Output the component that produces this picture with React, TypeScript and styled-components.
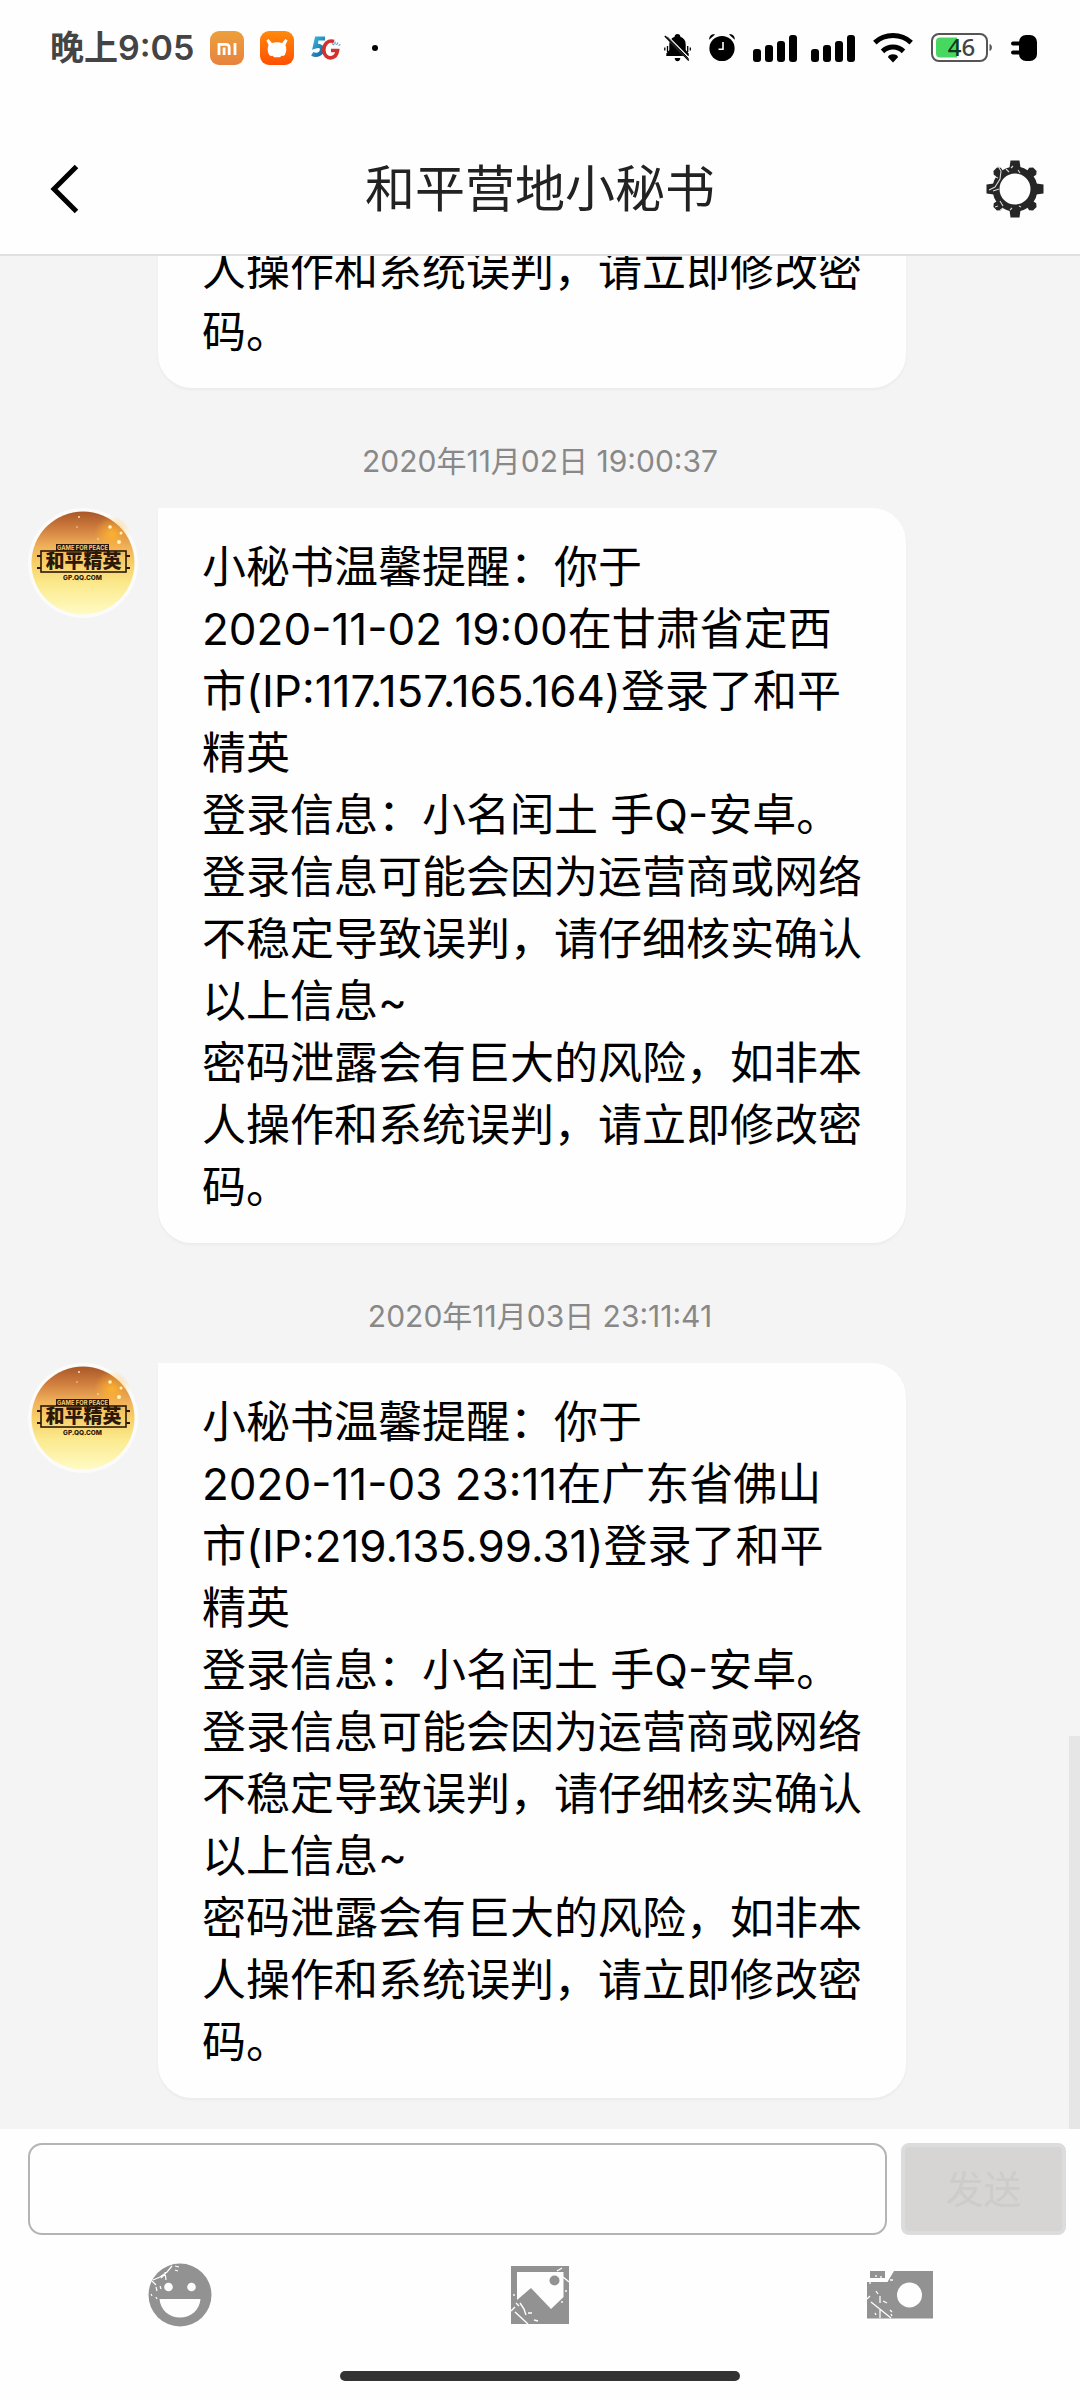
import React from 'react';
import styled, { createGlobalStyle } from 'styled-components';

const GlobalStyle = createGlobalStyle`
  * { box-sizing: border-box; }
  body {
    margin: 0;
    background: #fefefe;
    font-family: Inter, "Noto Sans CJK SC", sans-serif;
    color: #000;
  }
  button { font-family: inherit; padding: 0; border: 0; background: none; cursor: pointer; }
  svg { display: block; flex: none; }
`;

const Page = styled.div`
  display: flex;
  flex-direction: column;
  height: 100vh;
  overflow: hidden;
`;

const StatusBar = styled.div`
  display: flex;
  flex: none;
  align-items: center;
  justify-content: space-between;
  height: 96px;
  padding: 0 43px 0 50px;
`;

const StatusGroup = styled.div<{ $gap: number }>`
  display: flex;
  align-items: center;
  gap: ${(p) => p.$gap}px;
`;

const StatusDot = styled.span`
  width: 6px;
  height: 6px;
  margin-left: 14px;
  border-radius: 50%;
  background: #000;
`;

const Clock = styled.time`
  font-size: 34px;
  line-height: 40px;
  font-weight: 600;
  color: #444;
`;

const Header = styled.header`
  display: grid;
  flex: none;
  grid-template-columns: 120px 1fr 120px;
  align-items: center;
  height: 160px;
  padding: 28px 0 0;
  border-bottom: 2px solid #e0e0e0;
`;

const Title = styled.h1`
  margin: 0;
  text-align: center;
  font-size: 50px;
  line-height: 64px;
  font-weight: 400;
  color: #222;
`;

const HeaderButton = styled.button<{ $end?: boolean }>`
  display: flex;
  justify-content: ${(p) => (p.$end ? 'flex-end' : 'flex-start')};
  padding: ${(p) => (p.$end ? '0 36px 0 0' : '0 0 0 48px')};
`;

const Chat = styled.main`
  position: relative;
  display: flex;
  flex: 1;
  flex-direction: column;
  justify-content: flex-end;
  min-height: 0;
  padding: 0 28px 31px;
  overflow: hidden;
  background: #f4f4f4;
`;

const ScrollThumb = styled.div`
  position: absolute;
  right: 0;
  bottom: 0;
  width: 11px;
  height: 21%;
  background: #e6e6e6;
`;

const Stamp = styled.time`
  flex: none;
  padding: 53px 0 27px;
  text-align: center;
  font-size: 30px;
  line-height: 40px;
  color: #888;
`;

const Row = styled.article`
  display: flex;
  flex: none;
  align-items: flex-start;
  gap: 20px;
`;

const AvatarSlot = styled.div`
  flex: none;
  width: 110px;
`;

const Bubble = styled.div`
  max-width: 748px;
  padding: 28px 44px 25px;
  border-radius: 0 34px 34px 34px;
  background: #fefefe;
  box-shadow: 0 2px 3px rgba(0, 0, 0, 0.04);
`;

const Line = styled.p`
  margin: 0;
  font-size: 44px;
  line-height: 62px;
  white-space: pre-line;
`;

const Footer = styled.footer`
  flex: none;
  padding: 14px 0 19px;
  background: #fefefe;
`;

const Composer = styled.form`
  display: flex;
  gap: 14px;
  height: 92px;
  padding: 0 14px 0 28px;
`;

const MessageInput = styled.input`
  flex: 1;
  min-width: 0;
  padding: 0 24px;
  border: 2px solid #b4b4b4;
  border-radius: 14px;
  background: #fefefe;
  font: inherit;
  font-size: 38px;
  outline: none;
`;

const SendButton = styled.button`
  width: 165px;
  padding-bottom: 6px;
  border: 4px solid #dcdcdc;
  border-radius: 8px;
  background: #d6d5d3;
  font-size: 38px;
  color: #cdccca;
`;

const Tools = styled.nav`
  display: grid;
  grid-template-columns: repeat(3, 1fr);
  height: 120px;
`;

const Tool = styled.button`
  display: flex;
  align-items: center;
  justify-content: center;
`;

const HomeBar = styled.div`
  width: 37%;
  height: 10px;
  margin: 16px auto 0;
  border-radius: 5px;
  background: #333;
`;

const MiIcon = () => (
  <svg width="34" height="34" viewBox="0 0 34 34">
    <defs>
      <linearGradient id="mi" x1="0" y1="0" x2="0" y2="1">
        <stop offset="0" stopColor="#eca03c" />
        <stop offset="1" stopColor="#e8823f" />
      </linearGradient>
    </defs>
    <rect width="34" height="34" rx="9" fill="url(#mi)" />
    <g fill="none" stroke="#fff" strokeWidth="2.8">
      <path d="M9 24V13.4h7.2a3 3 0 0 1 3 3V24M14.1 16.5V24" />
      <path d="M25 12v12" />
    </g>
  </svg>
);

const MiCommunityIcon = () => (
  <svg width="34" height="34" viewBox="0 0 34 34">
    <defs>
      <linearGradient id="bunny" x1="0" y1="0" x2="0" y2="1">
        <stop offset="0" stopColor="#ff8a0c" />
        <stop offset="1" stopColor="#ff4f02" />
      </linearGradient>
    </defs>
    <rect width="34" height="34" rx="9" fill="url(#bunny)" />
    <path
      d="M6.400 9.600l2.200-1.600 3.300 4c3-1 7.200-1 10.200 0l3.300-4 2.200 1.600-2.200 4.400c1.400 3 1.200 7-.6 10-1.200 1-2.300 1-3.400.8l-1.300 1.400h-6.200l-1.300-1.400c-1.100.2-2.200.2-3.400-.8-1.800-3-2-7-.6-10z"
      fill="#fff"
    />
  </svg>
);

const FiveGIcon = () => (
  <svg width="32" height="26" viewBox="0 0 32 26">
    <defs>
      <linearGradient id="five" x1="0" y1="0" x2="1" y2="1">
        <stop offset="0" stopColor="#35b8dc" />
        <stop offset="1" stopColor="#155e9c" />
      </linearGradient>
    </defs>
    <path d="M15 3.500H6.800L5 11.500c4-1.500 7.500-.2 7 3.500-.6 4-5.500 6.500-9.800 3.800" fill="none" stroke="url(#five)" strokeWidth="4.200" />
    <path d="M24 6.500C18 4.500 13.800 9.500 13.800 15c0 5 3.500 8.500 7.700 7.700 3.500-.7 5.500-3.200 6-7.200h-6.500" fill="none" stroke="#d3312c" strokeWidth="3.600" />
    <path d="M22 8.500l2 1.500M25 6.500v3M28 7.500l-1.500 2.500M30.500 9.500l-2 1" stroke="#5f9ed2" strokeWidth="1.200" />
  </svg>
);

const MutedBellIcon = () => (
  <svg width="27" height="28" viewBox="0 0 27 28">
    <path d="M13.500 0c1.800 0 2.900 1.200 2.900 2.800 3.600 1.200 5.300 4 5.300 7.600v5.600l3 3.400V22H2.300v-2.600l3-3.400v-5.600c0-3.600 1.700-6.400 5.300-7.600C10.600 1.200 11.700 0 13.500 0zM10.700 24h5.600c0 2-1 3.200-2.800 3.200S10.700 26 10.700 24z" />
    <path d="M3.500 12v6M.8 13.500v3M23.700 12v6M26.300 13.500v3" stroke="#000" strokeWidth="1.300" />
    <path d="M1.800 1.600l24 24.500" stroke="#fefefe" strokeWidth="3.400" />
    <path d="M.8 2l24 24.500" stroke="#000" strokeWidth="1.400" />
    <path d="M3 2.600l21.500 22" stroke="#000" strokeWidth="1" />
  </svg>
);

const AlarmIcon = () => (
  <svg width="26" height="28" viewBox="0 0 26 28">
    <circle cx="13" cy="14.500" r="12.600" />
    <path d="M.2 5.800C0 2 2.500 0 6 .4zM25.800 5.800C26 2 23.500 0 20 .4z" />
    <path d="M14 8v7.200H9.500" fill="none" stroke="#fff" strokeWidth="1.600" />
  </svg>
);

const SignalIcon = () => (
  <svg width="44" height="27" viewBox="0 0 44 27">
    <rect x="0" y="14" width="8" height="13" rx="3" />
    <rect x="12" y="10" width="8" height="17" rx="3" />
    <rect x="24" y="6" width="8" height="21" rx="3" />
    <rect x="36" y="0" width="8" height="27" rx="3" />
  </svg>
);

const WifiIcon = () => (
  <svg width="40" height="30" viewBox="0 0 40 30">
    <path d="M1.800 9.600C12 .2 28 .2 38.200 9.600" fill="none" stroke="#000" strokeWidth="5" />
    <path d="M9.500 18.300c6-5.600 15-5.600 21 0" fill="none" stroke="#000" strokeWidth="5" />
    <path d="M15 24.300c0-4 10-4 10 0L20 29.500z" />
  </svg>
);

const BatteryIcon = () => (
  <svg width="62" height="30" viewBox="0 0 62 30">
    <rect x="1" y="1" width="55" height="27" rx="7" fill="#fff" stroke="#555" strokeWidth="2" />
    <path d="M9 4.500h17v20H9a4 4 0 0 1-4-4v-12a4 4 0 0 1 4-4z" fill="#48d862" />
    <path d="M58.500 11c3.200.6 3.200 6.400 0 7z" fill="#555" />
    <text x="30.500" y="23" textAnchor="middle" fontFamily="Noto Sans, sans-serif" fontSize="24" fontWeight="500" fill="#123a18">
      4<tspan fill="#444">6</tspan>
    </text>
  </svg>
);

const PlugIcon = () => (
  <svg width="26" height="26" viewBox="0 0 26 26">
    <rect x="8" y="0" width="18" height="26" rx="7" />
    <rect x="0" y="6.500" width="11" height="4" rx="2" />
    <rect x="0" y="15.500" width="11" height="4" rx="2" />
  </svg>
);

const BackIcon = () => (
  <svg width="32" height="52" viewBox="0 0 32 52">
    <path d="M28.500 3.500L6 26l22.500 22.500" fill="none" stroke="#000" strokeWidth="5" />
  </svg>
);

const GearIcon = () => (
  <svg width="58" height="58" viewBox="-29 -29 58 58">
    <g fill="#262626">
      {[0, 90, 180, 270].map((a) => (
        <path key={a} d="M-4.500-28.500h9l1.500 11h-12z" transform={`rotate(${a})`} />
      ))}
      {[45, 135, 225, 315].map((a) => (
        <path key={a} d="M-2.500-28h5l2.500 3-1.500 7h-7l-1.500-7z" transform={`rotate(${a})`} />
      ))}
    </g>
    <circle r="19" fill="none" stroke="#262626" strokeWidth="7" />
    <g fill="none" stroke="#d8d8d8" strokeWidth="1.100">
      <path d="M-17-23l3 5-1 8-5 8-6 3" />
      <path d="M-9-20l3 3M-4-21l2-2M3-19l2 3M-22 2l6-2M-15 12l3 5M-5 21l2-2M4 17l2 1" />
      <path d="M-20 18l3-1M-17-11l-3-1M-12 19l-3 2" strokeWidth="1" />
    </g>
  </svg>
);

const Avatar = () => (
  <svg width="110" height="110" viewBox="0 0 110 110" role="img" aria-label="和平精英">
    <defs>
      <linearGradient id="sky" x1="0" y1="0" x2="0" y2="1">
        <stop offset="0" stopColor="#a85828" />
        <stop offset="0.16" stopColor="#cf7c3e" />
        <stop offset="0.34" stopColor="#f0b15a" />
        <stop offset="0.5" stopColor="#f6cf68" />
        <stop offset="0.7" stopColor="#fbe98c" />
        <stop offset="1" stopColor="#fffbc4" />
      </linearGradient>
      <radialGradient id="glow">
        <stop offset="0" stopColor="#ffb52e" stopOpacity="0.9" />
        <stop offset="1" stopColor="#ffb52e" stopOpacity="0" />
      </radialGradient>
    </defs>
    <circle cx="55" cy="55" r="55" fill="#fbfbfa" />
    <circle cx="55" cy="55" r="51.500" fill="url(#sky)" />
    <circle cx="84" cy="26" r="18" fill="url(#glow)" />
    <g fill="#fff3c0">
      <circle cx="82" cy="19" r="1.800" />
      <circle cx="93" cy="25" r="1.500" />
      <circle cx="91" cy="34" r="2" />
      <circle cx="51" cy="9" r="0.900" />
      <circle cx="49" cy="19" r="0.700" />
      <circle cx="70" cy="31" r="0.800" />
    </g>
    <rect x="28" y="36" width="53" height="7" fill="#2c1808" />
    <text x="54.500" y="41.800" textAnchor="middle" fontSize="5.800" fontWeight="700" fill="#f6cf7c">GAME FOR PEACE</text>
    <rect x="13" y="43" width="85" height="21" fill="none" stroke="#2c1808" strokeWidth="1.600" />
    <path d="M9 48h4M9 60h4M98 48h4M98 60h4" stroke="#2c1808" strokeWidth="1.800" />
    <text x="55.500" y="60.300" textAnchor="middle" fontFamily="Noto Sans CJK SC, sans-serif" fontSize="19" fontWeight="900" fill="#2c1808">和平精英</text>
    <text x="54.500" y="71.800" textAnchor="middle" fontSize="6.500" fontWeight="800" fill="#2c1808">GP.QQ.COM</text>
  </svg>
);

const SmileIcon = () => (
  <svg width="64" height="64" viewBox="0 0 64 64">
    <circle cx="32" cy="32" r="31.500" fill="#929292" />
    <circle cx="20.500" cy="24" r="4.300" fill="#fefefe" />
    <circle cx="43.500" cy="24" r="4.300" fill="#fefefe" />
    <path d="M11.500 36h41c-1 11-9.500 18.500-20.500 18.500S12.500 47 11.500 36z" fill="#fefefe" />
    <g fill="none" stroke="#fefefe" strokeWidth="1.200">
      <path d="M5 17l7-3 7-5 5-6M13 15l5-5M17 9l1 8M27 3l4 1M27 7l3 1M4 18l4 4M8 24l1 4M12 23l1 3M3 31l1 2M8 34l1 2" />
    </g>
  </svg>
);

const PictureIcon = () => (
  <svg width="58" height="58" viewBox="0 0 58 58">
    <path fill="#929292" fillRule="evenodd" d="M0 0h58v58H0zM6 6v28l14-12 20 21 12.500-12V6z" />
    <circle cx="43.500" cy="14.500" r="5" fill="#929292" />
    <g fill="none" stroke="#fefefe" strokeWidth="1.400">
      <path d="M0 45l4-4M4 46l13 12M46 5l5-3M52 11l6 5M9 37l4 6 2 6M8 40l-3-3M17 47h4M55 24v2M51 35v2M3 28v2M23 54l4 1" />
    </g>
  </svg>
);

const CameraIcon = () => (
  <svg width="66" height="48" viewBox="0 0 66 48">
    <path fill="#929292" d="M3 0h15v7H3zM27 0h39v47.500H0V11h20.500z" />
    <circle cx="42.500" cy="24" r="12.500" fill="#fefefe" />
    <g fill="none" stroke="#fefefe" strokeWidth="1.300">
      <path d="M0 28l3-3M4 31l20 16M13 38v9M9 20l2 3M13 25v7M16 30l4 2M23 9h3M9 4v2M14 5v2M23 39l2 2M8 42l1 2M3 11v2M24 43l1 2" />
    </g>
  </svg>
);

const tail = '人操作和系统误判，请立即修改密码。';

const messages = [
  {
    stamp: '2020年11月02日 19:00:37',
    login: '小秘书温馨提醒：你于\n2020-11-02 19:00在甘肃省定西\n市(IP:117.157.165.164)登录了和平\n精英',
  },
  {
    stamp: '2020年11月03日 23:11:41',
    login: '小秘书温馨提醒：你于\n2020-11-03 23:11在广东省佛山\n市(IP:219.135.99.31)登录了和平\n精英',
  },
];

export default function App() {
  return (
    <Page lang="zh-CN">
      <GlobalStyle />
      <StatusBar>
        <StatusGroup $gap={16}>
          <Clock>晚上9:05</Clock>
          <MiIcon />
          <MiCommunityIcon />
          <FiveGIcon />
          <StatusDot />
        </StatusGroup>
        <StatusGroup $gap={18}>
          <MutedBellIcon />
          <AlarmIcon />
          <StatusGroup $gap={14}>
            <SignalIcon />
            <SignalIcon />
          </StatusGroup>
          <WifiIcon />
          <BatteryIcon />
          <PlugIcon />
        </StatusGroup>
      </StatusBar>
      <Header>
        <HeaderButton type="button" aria-label="返回">
          <BackIcon />
        </HeaderButton>
        <Title>和平营地小秘书</Title>
        <HeaderButton type="button" aria-label="设置" $end>
          <GearIcon />
        </HeaderButton>
      </Header>
      <Chat>
        <Row>
          <AvatarSlot />
          <Bubble>
            <Line>{tail}</Line>
          </Bubble>
        </Row>
        {messages.map((m) => (
          <React.Fragment key={m.stamp}>
            <Stamp>{m.stamp}</Stamp>
            <Row>
              <AvatarSlot>
                <Avatar />
              </AvatarSlot>
              <Bubble>
                <Line>{m.login}</Line>
                <Line>登录信息：小名闰土 手Q-安卓。</Line>
                <Line>登录信息可能会因为运营商或网络不稳定导致误判，请仔细核实确认以上信息~</Line>
                <Line>密码泄露会有巨大的风险，如非本{tail}</Line>
              </Bubble>
            </Row>
          </React.Fragment>
        ))}
        <ScrollThumb />
      </Chat>
      <Footer>
        <Composer onSubmit={(e) => e.preventDefault()}>
          <MessageInput type="text" aria-label="消息" />
          <SendButton type="submit">发送</SendButton>
        </Composer>
        <Tools>
          <Tool type="button" aria-label="表情">
            <SmileIcon />
          </Tool>
          <Tool type="button" aria-label="图片">
            <PictureIcon />
          </Tool>
          <Tool type="button" aria-label="拍照">
            <CameraIcon />
          </Tool>
        </Tools>
        <HomeBar />
      </Footer>
    </Page>
  );
}
